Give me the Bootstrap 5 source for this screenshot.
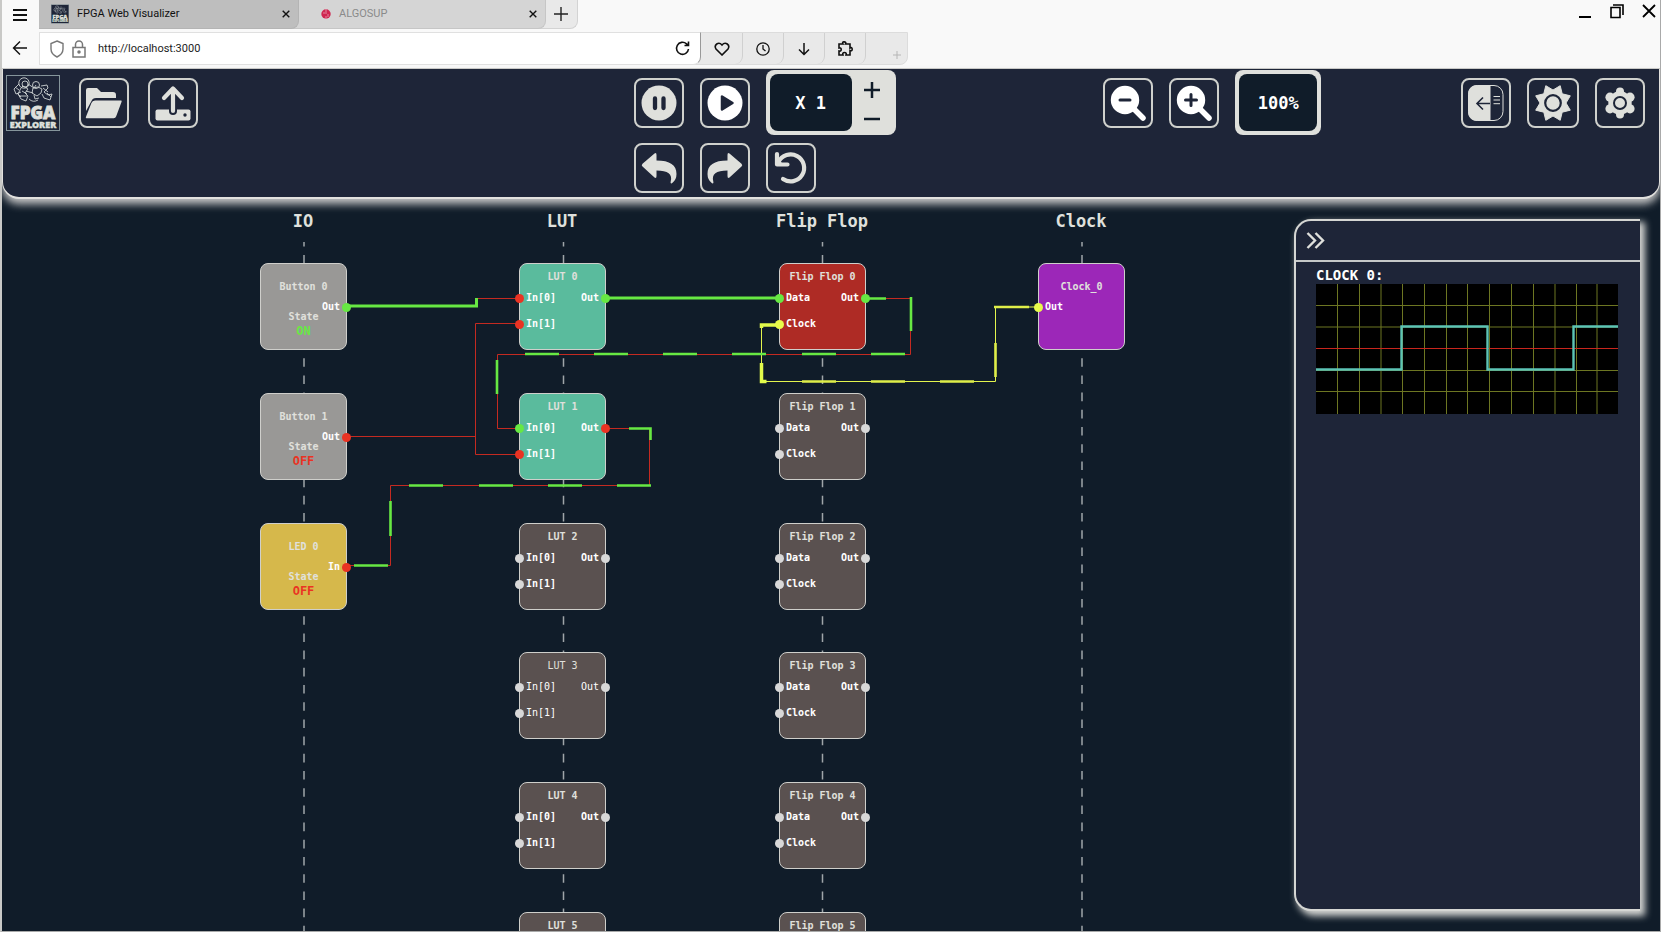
<!DOCTYPE html>
<html lang="en">
<head>
<meta charset="utf-8">
<meta name="viewport" content="width=device-width, initial-scale=1">
<title>FPGA Web Visualizer</title>
<link href="https://cdn.jsdelivr.net/npm/bootstrap@5.3.0/dist/css/bootstrap.min.css" rel="stylesheet">
<style>
:root{--cream:#dfe0dc;--panel:#1e2538;--ink:#101c29;--mono:"DejaVu Sans Mono","Liberation Mono",monospace}
body{height:100vh;overflow:hidden;background:var(--ink);border:1px solid #a9aaaa;border-top:0;border-left:2px solid #c9c9c7;font-family:Roboto,Inter,sans-serif;font-size:11px;line-height:16px;color:#222}
button{padding:0;border:0;background:none;color:inherit;font:inherit}
svg{display:block;flex:none}

/* browser frame */
.chrome{height:69px;background:#f9f9f9;border-bottom:1px solid #c9c9c7}
.chrome-menu{width:35px;height:29px}
.tab-item{height:29px;border-bottom-right-radius:8px;border:1px solid #b4b4b4;border-top:0;border-left:0;margin-left:-8px;padding:0 8px 1px 22px}
.tab-item.tab-on{width:260px;background:#bebebe;margin-left:2px;padding-left:12px;z-index:3;color:#111}
.tab-item.tab-off{width:255px;background:#d5d5d5;border-color:#c6c6c6;z-index:2;color:#8a8a8a}
.tab-item.tab-new{width:40px;background:#e9e9e9;border-color:#d3d3d3;z-index:1;padding:0 8px 1px 16px}
.bar-row{margin-top:3px}
.url-box{width:662px;height:33px;background:#fff;border:1px solid #e0e0e0;border-right:1px solid #999;border-bottom-right-radius:8px;margin-left:2px;padding:0 10px;z-index:2}
.url-box input{border:0;outline:0;padding:0;font-size:11px;line-height:16px;color:#222;background:none}
.tools{height:33px;background:#e9e9e9;border:1px solid #dcdcdc;border-bottom-right-radius:8px;margin-left:-8px;padding-left:8px}
.tools button{width:41px;height:31px;border-right:1px solid #d0d0d0;border-bottom-right-radius:8px}
.tools button:last-child{border:0;align-items:flex-end!important;justify-content:flex-end!important;padding:0 6px 5px 0}
.win-ctl{gap:18px;padding:3px 4px 0 0}

/* toolbar */
.topbar{display:grid;grid-template-columns:631fr 470fr 358fr 184fr;align-items:start;background:var(--panel);border:2px solid #e2e1de;border-width:0 1px 2px 1px;border-radius:0 0 17px 17px;padding:1px 14px 4px 0;box-shadow:0 5px 8px #c9c9c9;z-index:5}
.tool-row{height:65px}
.tool-btn{width:50px;height:50px;border:2px solid #cfd1cd;border-radius:8px;color:var(--cream);flex:none}
.tool-btn.wide{width:52px}
.tool-btn svg{width:100%;height:100%}
.gap-tool{gap:16px}
.gap-file{gap:19px;padding-left:3px}
.readout{height:65px;background:var(--cream);border-radius:8px;padding:4px}
.readout output{display:flex;align-items:center;justify-content:center;height:57px;background:var(--ink);border-radius:8px;color:#fff;font:bold 17px/20px var(--mono)}
.speed output{width:82px}
.zoomed output{width:78px}
.speed-keys{width:40px}

/* diagram */
.stage{min-height:0}
.wires{position:absolute;left:0;top:0;width:1200px;height:740px}
.col-title{position:absolute;top:11px;width:160px;text-align:center;color:var(--cream);font:bold 17px/22px var(--mono)}
.chip{position:absolute;width:87px;height:87px;border:1px solid #cfcfcb;border-radius:8px;font:bold 10px/12px var(--mono);color:#fff}
.chip-name{position:absolute;left:0;right:0;text-align:center;color:#e0e0dc}
.chip-name.at-top{top:7px}
.chip-name.at-mid{top:17px}
.thin{font-weight:400}
.pin{position:absolute;white-space:nowrap}
.pin-l{left:6px}
.pin-r{right:6px}
.pin::before{content:"";position:absolute;top:2px;width:9px;height:9px;border-radius:50%;background:var(--dot)}
.pin-l::before{left:-11px}
.pin-r::before{right:-11px}
.state-box{position:absolute;top:47px;left:0;right:0;text-align:center;color:#e0e0dc}
.state-box strong{display:block;font-size:12px;line-height:16px}
.is-io{background:#999896}.is-led{background:#d6b84b}.is-lut{background:#5abb9d}.is-ff{background:#ae2b25}.is-clk{background:#9c27b8}.is-idle{background:#5a5150}

/* side panel */
.scope-panel{width:346px;margin:20px 20px 20px 0;background:var(--panel);border:2px solid #d5d6d3;border-right:0;border-radius:17px 0 0 17px;box-shadow:4px 4px 7px 1px #d5d6d3}
.scope-head{height:41px;border-bottom:2px solid #c6c8c8;padding-left:10px;color:var(--cream)}
.scope-body{padding:5px 22px 0 20px}
.scope-body h2{margin:0;color:#fff;font:bold 14px/17px var(--mono)}
</style>
</head>
<body class="d-flex flex-column">
<header class="chrome flex-shrink-0">
  <div class="d-flex align-items-start">
    <button class="chrome-menu d-flex align-items-center justify-content-center" aria-label="Menu"><svg width="16" height="14" viewBox="0 0 16 14" stroke="#111" stroke-width="2"><path d="M1 2h14M1 7h14M1 12h14"/></svg></button>
    <div class="tab-item tab-on d-flex align-items-center position-relative">
      <svg width="18" height="20" viewBox="0 0 54 56"><use href="#logo-art"/></svg>
      <span class="ms-2 flex-fill">FPGA Web Visualizer</span>
      <button aria-label="Close tab"><svg width="8" height="8" viewBox="0 0 8 8" stroke="#111" stroke-width="1.4"><path d="M.7.7l6.6 6.6M7.300.7L.7 7.300"/></svg></button>
    </div>
    <div class="tab-item tab-off d-flex align-items-center position-relative">
      <svg class="ms-2" width="10" height="10" viewBox="0 0 10 10"><circle cx="5" cy="5" r="4.700" fill="#cf2650"/><path d="M5 0v5M3 3v2M7 5v3M5 7v3" stroke="#e9a0b2" stroke-width=".8"/></svg>
      <span class="ms-1 ps-1 flex-fill">ALGOSUP</span>
      <button aria-label="Close tab"><svg width="8" height="8" viewBox="0 0 8 8" stroke="#111" stroke-width="1.4"><path d="M.7.7l6.6 6.6M7.300.7L.7 7.300"/></svg></button>
    </div>
    <button class="tab-item tab-new d-flex align-items-center position-relative" aria-label="New tab"><svg width="14" height="14" viewBox="0 0 14 14" stroke="#222" stroke-width="1.4"><path d="M7 0v14M0 7h14"/></svg></button>
    <div class="win-ctl d-flex ms-auto">
      <button aria-label="Minimise"><svg width="14" height="16" viewBox="0 0 14 16"><path d="M1 14h12" stroke="#000" stroke-width="2"/></svg></button>
      <button aria-label="Restore"><svg width="14" height="16" viewBox="0 0 14 16" fill="none" stroke="#000" stroke-width="1.600"><path d="M1 4.500h9v10H1zM3 2h10V12"/></svg></button>
      <button aria-label="Close"><svg width="14" height="16" viewBox="0 0 14 16" stroke="#000" stroke-width="1.800"><path d="M1 2l12 12M13 2L1 14"/></svg></button>
    </div>
  </div>
  <div class="bar-row d-flex">
    <button class="chrome-menu d-flex align-items-center justify-content-center" aria-label="Back"><svg width="16" height="16" viewBox="0 0 16 16" fill="none" stroke="#111" stroke-width="1.400"><path d="M15 9H1.500M8 2.500L1.500 9 8 15.500"/></svg></button>
    <label class="url-box d-flex align-items-center position-relative">
      <svg width="14" height="18" viewBox="0 0 14 18" fill="none" stroke="#777" stroke-width="1.400"><path d="M7 1l6 2.500V9q0 5-6 8Q1 14 1 9V3.500z"/></svg>
      <svg class="ms-2" width="14" height="18" viewBox="0 0 14 18" fill="none" stroke="#777" stroke-width="1.500"><path d="M1 7.500h12V17H1zM3.500 7V4.500a3.500 3.500 0 0 1 7 0V7"/><circle cx="7" cy="12" r="1" fill="#777"/></svg>
      <input class="flex-fill ms-2 ps-1" type="text" value="http://localhost:3000" aria-label="Address">
      <svg width="15" height="15" viewBox="0 0 15 15" fill="none" stroke="#111" stroke-width="1.600"><path d="M13.500 8a6 6 0 1 1-2-5.200l1.500 1.400M13.500.5v4h-4"/></svg>
    </label>
    <div class="tools d-flex">
      <button class="d-flex align-items-center justify-content-center" aria-label="Favourites"><svg width="16" height="14" viewBox="0 0 16 14" fill="none" stroke="#111" stroke-width="1.600"><path d="M8 13L2 7C-.5 3 4.500-1 8 3c3.500-4 8.500 0 6 4z"/></svg></button>
      <button class="d-flex align-items-center justify-content-center" aria-label="History"><svg width="14" height="14" viewBox="0 0 14 14" fill="none" stroke="#111" stroke-width="1.300"><circle cx="7" cy="7" r="6.200"/><path d="M7 3v4l2.500 2"/></svg></button>
      <button class="d-flex align-items-center justify-content-center" aria-label="Downloads"><svg width="12" height="14" viewBox="0 0 12 14" fill="none" stroke="#111" stroke-width="1.500"><path d="M6 1v11M1 7.500L6 12.500l5-5"/></svg></button>
      <button class="d-flex align-items-center justify-content-center" aria-label="Extensions"><svg width="15" height="15" viewBox="0 0 15 15" fill="none" stroke="#111" stroke-width="1.600"><path d="M1 3h4q-1-2 1-2.200Q8.500 1 7.500 3H12v4q2-1 2.200 1 0 2.500-2.200 1.500V14H8q.8-2.500-1.500-2.500T5 14H1v-4q2.200.5 2.200-1.500T1 7z"/></svg></button>
      <button class="d-flex" aria-label="Add"><svg width="8" height="8" viewBox="0 0 8 8" stroke="#b5b5b5"><path d="M4 0v8M0 4h8"/></svg></button>
    </div>
  </div>
</header>

<nav class="topbar position-relative flex-shrink-0" aria-label="Simulation">
  <div class="tool-row gap-file d-flex align-items-center">
    <a href="#" aria-label="FPGA Explorer"><svg width="54" height="56" viewBox="0 0 54 56">
      <g id="logo-art">
        <rect x=".5" y=".5" width="53" height="55" fill="#1e2538" stroke="#85959b"/>
        <g fill="none" stroke="#cdd3d2" stroke-width=".9"><circle cx="18" cy="8" r="5.200"/><circle cx="19" cy="9" r="3"/><path d="M13 9l-5 5 2 5 5-2M15 13l-3 6 3 5 5 2 2-5-3-3 3-4-5-3zM9 12l4 3M11 18l4 4M22 9l6 4 2-3M20 16l7 2M14 21l7 0M16 16l5 3"/><circle cx="30" cy="10" r="3.500"/><path d="M27 13l-1 5 5 3 4-3 1-4-4-2zM35 11l6-1 1 3-4 4 4 3 4-1-2 6-6-2-2-4M37 13l5 4M28 20l1 4 4-1M41 18l4 4M23 24q4 4 9 1"/></g>
        <g fill="#dfe0dc" stroke="#dfe0dc" font-family="'Noto Sans','Open Sans',sans-serif" font-weight="900" text-anchor="middle"><text x="27" y="44" font-size="17" stroke-width=".8">FPGA</text><text x="27" y="53" font-size="9" stroke-width=".4">EXPLORER</text></g>
      </g></svg></a>
    <button class="tool-btn" aria-label="Open"><svg viewBox="2 2 46 46" fill="currentColor"><path d="M7 33V12q0-2 2-2h9l4 4h12q3 0 3 3v3H17q-3.500 0-4.500 3z"/><path d="M16 22.500h26q1 0 .6 1.200l-5.400 14.600q-.7 1.900-2.500 1.900H7.500q-1 0-.6-1.200l5.500-14q.9-2.500 3.600-2.500z"/></svg></button>
    <button class="tool-btn" aria-label="Upload"><svg viewBox="2 2 46 46"><rect x="7.500" y="31.500" width="35" height="11" rx="2" fill="currentColor"/><circle cx="37" cy="37" r="1.700" fill="#1e2538"/><path d="M25 12v21" stroke="#1e2538" stroke-width="8" stroke-linecap="round"/><path d="M25 10.500V33M16 20l9-9.500 9 9.500" fill="none" stroke="currentColor" stroke-width="4.200" stroke-linecap="round" stroke-linejoin="round"/></svg></button>
  </div>
  <div class="d-flex flex-column gap-2">
    <div class="tool-row d-flex align-items-center gap-tool">
      <button class="tool-btn" aria-label="Pause"><svg viewBox="2 2 46 46"><circle cx="25" cy="25" r="17.500" fill="currentColor"/><path d="M21 20.500v9.500M29.500 20.500V30" stroke="#1e2538" stroke-width="4.300" stroke-linecap="round"/></svg></button>
      <button class="tool-btn" aria-label="Play"><svg viewBox="2 2 46 46"><circle cx="25" cy="25" r="17.500" fill="#fff"/><path d="M22 18.500v13l10.500-6.500z" fill="#1e2538" stroke="#1e2538" stroke-width="2.500" stroke-linejoin="round"/></svg></button>
      <div class="readout speed d-flex">
        <output>X 1</output>
        <div class="speed-keys d-flex flex-column align-items-center justify-content-around">
          <button aria-label="Faster"><svg width="18" height="18" viewBox="0 0 18 18" stroke="#101c29" stroke-width="2.500"><path d="M9 1v16M1 9h16"/></svg></button>
          <button aria-label="Slower"><svg width="18" height="10" viewBox="0 0 18 10" stroke="#101c29" stroke-width="2.500"><path d="M1 5h16"/></svg></button>
        </div>
      </div>
    </div>
    <div class="d-flex gap-tool">
      <button class="tool-btn" aria-label="Undo"><svg viewBox="2 2 46 46" fill="currentColor"><path d="M20.500 10.500Q22.500 9 22.500 12v5.500C36 17.500 42.500 22 42.500 31q0 6-4.500 9.300-2 .5-1.300-1.800 3-11-14.200-11V33q0 3-2 1.600L8.500 23.500q-1.500-1.400 0-2.800z"/></svg></button>
      <button class="tool-btn" aria-label="Redo"><svg viewBox="2 2 46 46" fill="currentColor"><path d="M29.500 10.500Q27.500 9 27.500 12v5.500C14 17.500 7.500 22 7.500 31q0 6 4.500 9.300 2 .5 1.300-1.800-3-11 14.200-11V33q0 3 2 1.600l12-11.100q1.500-1.400 0-2.800z"/></svg></button>
      <button class="tool-btn" aria-label="Reset"><svg viewBox="2 2 46 46" fill="none" stroke="currentColor" stroke-width="4.200" stroke-linecap="round"><path d="M12.500 19A13.500 13.500 0 1 1 17 36"/><path d="M11 11v10.500h10.500" stroke-linejoin="round"/><path d="M12 16l5 5h-5z" fill="currentColor" stroke="none"/></svg></button>
    </div>
  </div>
  <div class="tool-row d-flex align-items-center gap-tool">
    <button class="tool-btn text-white" aria-label="Zoom out"><svg viewBox="2 2 46 46"><path d="M32 32l8 8" stroke="#fff" stroke-width="5.500" stroke-linecap="round"/><circle cx="22" cy="22" r="14.200" fill="#fff"/><path d="M17 22h10" stroke="#1e2538" stroke-width="3" stroke-linecap="round"/></svg></button>
    <button class="tool-btn text-white" aria-label="Zoom in"><svg viewBox="2 2 46 46"><path d="M32 32l8 8" stroke="#fff" stroke-width="5.500" stroke-linecap="round"/><circle cx="22" cy="22" r="14.200" fill="#fff"/><path d="M16.500 22h11M22 16.500v11" stroke="#1e2538" stroke-width="3" stroke-linecap="round"/></svg></button>
    <div class="readout zoomed"><output>100%</output></div>
  </div>
  <div class="tool-row d-flex align-items-center gap-tool">
    <button class="tool-btn" aria-label="Toggle panel"><svg viewBox="2 2 46 46" fill="none" stroke="currentColor"><rect x="7.500" y="7.500" width="34.500" height="35" rx="9"/><path d="M29 7.500H16.500q-9 0-9 9v17q0 9 9 9H29z" fill="currentColor"/><path d="M29 25.500H16M22 19.500l-6 6 6 6" stroke="#1e2538" stroke-width="1.600"/><path d="M32.500 18.500H39M32.500 22H39M32.500 25.700H39"/></svg></button>
    <button class="tool-btn wide" aria-label="Theme"><svg viewBox="2 2 48 46" fill="currentColor"><path stroke="currentColor" stroke-linejoin="round" d="M43.300 32.200L35.200 34.200 33.200 42.300 26 38 18.800 42.300 16.800 34.200 8.700 32.200 13 25 8.700 17.800 16.800 15.800 18.800 7.700 26 12 33.200 7.700 35.200 15.800 43.300 17.800 39 25z"/><circle cx="26" cy="25" r="7.800" stroke="#1e2538" stroke-width="2.200"/></svg></button>
    <button class="tool-btn" aria-label="Settings"><svg viewBox="2 2 46 46" fill="currentColor"><circle cx="25" cy="25" r="11.700"/><circle cx="25" cy="13.500" r="4"/><circle cx="25" cy="36.500" r="4"/><circle cx="35" cy="19.200" r="4.600"/><circle cx="35" cy="30.800" r="4.600"/><circle cx="15" cy="19.200" r="4.600"/><circle cx="15" cy="30.800" r="4.600"/><circle cx="25" cy="25" r="6" stroke="#1e2538" stroke-width="2"/></svg></button>
  </div>
</nav>

<div class="stage d-flex flex-fill">
  <main class="position-relative flex-fill overflow-hidden" id="stage">
    <svg class="wires" viewBox="2 199 1200 740" fill="none" aria-hidden="true">
      <g stroke="#9fa5a9" stroke-width="1.500" stroke-dasharray="8.600 8.600" stroke-dashoffset="4.200"><path d="M304 242V940M563.500 242V940M822.500 242V940M1082 242V940"/></g>
      <g stroke="#c42a21"><path d="M476 298.500h43M346 436.500h129.500M519 323.500h-43.500V454.500h43.500M865 298.500h45.500V354.500H497.500v74h21.500M606 428.500h43.500V485.500H390.500V565.500H346"/></g>
      <path stroke="#e3f44d" stroke-width="1" d="M779 325h-17.500V381.500H995.500V307H1038"/>
      <path stroke="#67e843" stroke-width="3" d="M346 306H476.500V298M606 298H779"/>
      <path stroke="#67e843" stroke-width="2.600" d="M865 298.500h21M911 297v34M905 354h-34M836 354h-34M766 354h-34M697 354h-34M628 354h-34M559 354h-34M497 360v34M629 428.500h21.500V440M651 485.500h-34M582 485.500h-34M513 485.500h-34M443 485.500h-34M390.500 501v35M388 565.500h-34"/>
      <path stroke="#e3fb4b" stroke-width="3.500" d="M779 325h-17.500v3M761.500 363v18.500h5"/>
      <path stroke="#dfee49" stroke-width="2.600" d="M802 381.500h34M871 381.500h34M940 381.500h34M995.500 343v34M994 307h35"/>
    </svg>
  </main>

  <aside class="scope-panel flex-shrink-0">
    <div class="scope-head d-flex align-items-center"><button aria-label="Collapse panel"><svg width="19" height="17" viewBox="0 0 19 17" fill="none" stroke="currentColor" stroke-width="2.400"><path d="M1.500 1l7.500 7.500L1.500 16M9.500 1l7.500 7.500L9.500 16"/></svg></button></div>
    <div class="scope-body">
      <h2>CLOCK 0:</h2>
      <svg class="w-100" viewBox="0 0 302 130" fill="none" role="img" aria-label="Clock 0 waveform">
        <rect width="302" height="130" fill="#000"/>
        <path stroke="#6d7622" d="M21.500 0v130M43.500 0v130M65 0v130M86.500 0v130M108.500 0v130M130.500 0v130M151.500 0v130M173.500 0v130M195.500 0v130M217.500 0v130M239 0v130M260.500 0v130M281 0v130M0 21.500h302M0 43h302M0 86.500h302M0 107.500h302"/>
        <path stroke="#c8261d" d="M0 64.500h302"/>
        <path stroke="#5cc4b5" stroke-width="2.400" d="M0 85.500h85.500V42.500h86v43h86V42.500h44.500"/>
      </svg>
    </div>
  </aside>
</div>

<script src="https://cdn.jsdelivr.net/npm/bootstrap@5.3.0/dist/js/bootstrap.bundle.min.js"></script>
<script>
// Diagram data: x of each column's chips, y of each row, relative to the stage.
const rows = [64, 194, 324, 453, 583, 713];
const cols = { IO: 258, LUT: 517, 'Flip Flop': 777, Clock: 1036 };
const ON = '#67e843', OFF = '#ea3323', CLK = '#e8fb4b', NC = '#d8d8d8';
const chips = [];
const pin = (side, top, label, dot) => ({ side, top, label, dot });
const add = (col, row, kind, name, pins, extra = {}) => chips.push({ col, row, kind, name, pins, ...extra });

add('IO', 0, 'io', 'Button 0', [pin('r', 37, 'Out', ON)], { state: 'ON' });
add('IO', 1, 'io', 'Button 1', [pin('r', 37, 'Out', OFF)], { state: 'OFF' });
add('IO', 2, 'led', 'LED 0', [pin('r', 37, 'In', OFF)], { state: 'OFF' });
add('Clock', 0, 'clk', 'Clock_0', [pin('l', 37, 'Out', CLK)], { mid: true });
const lutDots = [[OFF, OFF, ON], [ON, OFF, OFF]];
for (let i = 0; i < 6; i++) {
  const d = lutDots[i] || [NC, NC, NC];
  add('LUT', i, i < 2 ? 'lut' : 'idle', 'LUT ' + i,
    [pin('l', 28, 'In[0]', d[0]), pin('l', 54, 'In[1]', d[1]), pin('r', 28, 'Out', d[2])], { thin: i === 3 });
  const f = i ? [NC, NC, NC] : [ON, CLK, ON];
  add('Flip Flop', i, i ? 'idle' : 'ff', 'Flip Flop ' + i,
    [pin('l', 28, 'Data', f[0]), pin('l', 54, 'Clock', f[1]), pin('r', 28, 'Out', f[2])]);
}

const stage = document.getElementById('stage');
const titles = Object.entries(cols).map(([t, x]) => `<h2 class="col-title" style="left:${x + 43 - 80}px">${t}</h2>`);
const cards = chips.map(c => `<div class="chip is-${c.kind} ${c.thin ? 'thin' : ''}" style="left:${cols[c.col]}px;top:${rows[c.row]}px">
  <div class="chip-name ${c.state || c.mid ? 'at-mid' : 'at-top'}">${c.name}</div>
  ${c.pins.map(p => `<span class="pin pin-${p.side}" style="top:${p.top}px;--dot:${p.dot}">${p.label}</span>`).join('')}
  ${c.state ? `<div class="state-box">State<strong style="color:${c.state === 'ON' ? ON : OFF}">${c.state}</strong></div>` : ''}
</div>`);
stage.insertAdjacentHTML('beforeend', titles.join('') + cards.join(''));
</script>
</body>
</html>
